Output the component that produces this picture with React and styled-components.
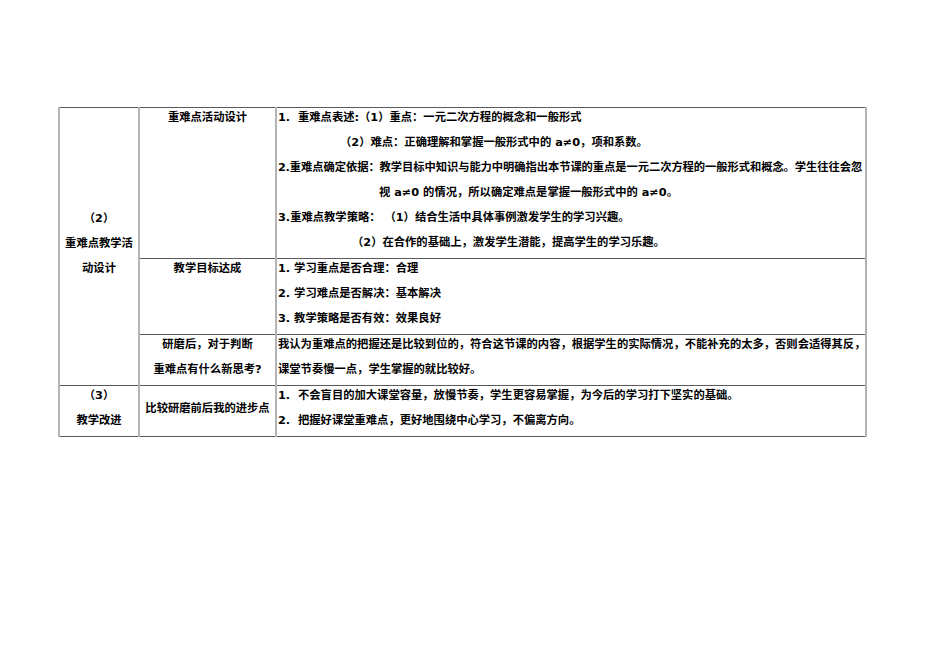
import React from 'react'
import styled, { createGlobalStyle } from 'styled-components'

const GlobalStyle = createGlobalStyle`
  body {
    margin: 0;
    background: #fff;
  }
`

export default function App() {
  return (
    <Page>
      <GlobalStyle />
      <Table>
        <colgroup>
          <col style={{ width: 80 }} />
          <col style={{ width: 137 }} />
          <col style={{ width: 590 }} />
        </colgroup>
        <tbody>
          <tr>
            <Cell rowSpan={3} $align="center" $valign="middle">
              <Line>（2）</Line>
              <Line>重难点教学活</Line>
              <Line>动设计</Line>
            </Cell>
            <Cell $align="center">
              <Line>重难点活动设计</Line>
            </Cell>
            <Cell>
              <Line>1.  重难点表述:（1）重点：一元二次方程的概念和一般形式</Line>
              <Line $indent={62}>（2）难点：正确理解和掌握一般形式中的 a≠0，项和系数。</Line>
              <Line $justify>2.重难点确定依据：教学目标中知识与能力中明确指出本节课的重点是一元二次方程的一般形式和概念。学生往往会忽</Line>
              <Line $indent={101}>视 a≠0 的情况，所以确定难点是掌握一般形式中的 a≠0。</Line>
              <Line>3.重难点教学策略： （1）结合生活中具体事例激发学生的学习兴趣。</Line>
              <Line $indent={74}>（2）在合作的基础上，激发学生潜能，提高学生的学习乐趣。</Line>
            </Cell>
          </tr>
          <tr>
            <Cell $align="center">
              <Line>教学目标达成</Line>
            </Cell>
            <Cell>
              <Line>1. 学习重点是否合理：合理</Line>
              <Line>2. 学习难点是否解决：基本解决</Line>
              <Line>3. 教学策略是否有效：效果良好</Line>
            </Cell>
          </tr>
          <tr>
            <Cell $align="center">
              <Line>研磨后，对于判断</Line>
              <Line>重难点有什么新思考?</Line>
            </Cell>
            <Cell>
              <Line>我认为重难点的把握还是比较到位的，符合这节课的内容，根据学生的实际情况，不能补充的太多，否则会适得其反，</Line>
              <Line>课堂节奏慢一点，学生掌握的就比较好。</Line>
            </Cell>
          </tr>
          <tr>
            <Cell $align="center">
              <Line>（3）</Line>
              <Line>教学改进</Line>
            </Cell>
            <Cell $align="center" $valign="middle">
              <Line>比较研磨前后我的进步点</Line>
            </Cell>
            <Cell>
              <Line>1.  不会盲目的加大课堂容量，放慢节奏，学生更容易掌握，为今后的学习打下坚实的基础。</Line>
              <Line>2.  把握好课堂重难点，更好地围绕中心学习，不偏离方向。</Line>
            </Cell>
          </tr>
        </tbody>
      </Table>
    </Page>
  )
}

const Page = styled.div`
  padding: 107px 0 0 58px;
  font-family: "DejaVu Sans", "Noto Sans CJK SC", sans-serif;
  font-weight: bold;
  font-size: 11.3px;
  color: #000;
`

const Table = styled.table`
  border-collapse: collapse;
  table-layout: fixed;
  width: 809px;
`

const Cell = styled.td`
  border-top: 1px solid #5a5a5a;
  border-bottom: 1px solid #5a5a5a;
  border-left: 2px solid #b4b4b4;
  border-right: 2px solid #b4b4b4;
  padding: 0 1px;
  vertical-align: ${p => p.$valign || 'top'};
  text-align: ${p => p.$align || 'left'};
  white-space: pre;
`

const Line = styled.div`
  height: 25px;
  line-height: 19px;
  overflow: hidden;
  padding-left: ${p => p.$indent || 0}px;
  ${p => p.$justify && `
    white-space: normal;
    letter-spacing: -0.25px;
    text-align: justify;
    text-align-last: justify;
    padding-right: 2px;
  `}
`
